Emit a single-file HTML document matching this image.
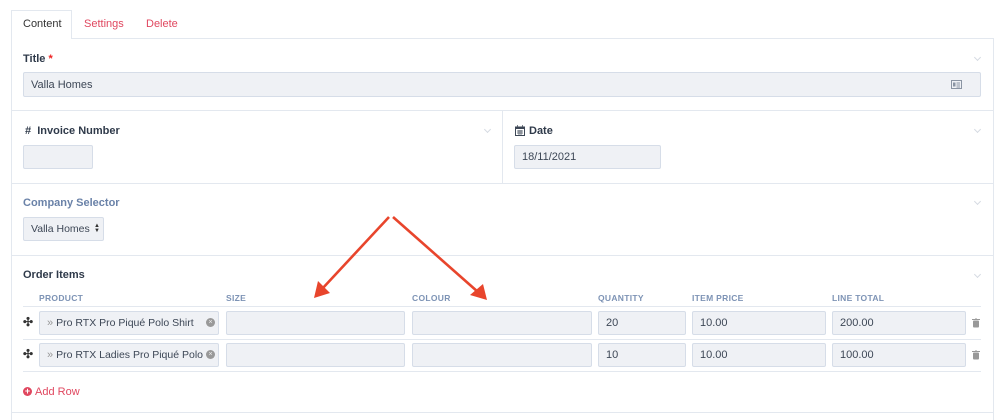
<!DOCTYPE html>
<html><head><meta charset="utf-8"><style>
*{box-sizing:border-box;margin:0;padding:0}
body{width:1000px;height:420px;background:#fff;font-family:"Liberation Sans",sans-serif;position:relative;overflow:hidden;color:#3d4756}
.a{position:absolute}
.hl{position:absolute;height:1px;background:#e3e8ef}
.vl{position:absolute;width:1px;background:#e3e8ef}
.in{position:absolute;background:#eff1f5;border:1px solid #d6dde8;border-radius:2px;font-size:11px;color:#3d4756;padding-left:7px;display:flex;align-items:center;white-space:nowrap;overflow:hidden}
.lb{position:absolute;font-size:11px;font-weight:bold;color:#2f3a4a}
.th{position:absolute;font-size:8.5px;font-weight:bold;color:#7d93b5;letter-spacing:.3px}
.chev{position:absolute;width:5px;height:5px;border-right:1px solid #d5dae2;border-bottom:1px solid #d5dae2;transform:rotate(45deg)}
.pt{display:inline-block;width:150px;overflow:hidden;font-size:10.5px}
</style></head><body>
<div class="a" style="left:11px;top:10px;width:61px;height:29px;border:1px solid #e3e8ef;border-bottom:none;background:#fff;z-index:2"></div>
<div class="a" style="left:23px;top:18px;font-size:11px;color:#333;z-index:3">Content</div>
<div class="a" style="left:84px;top:18px;font-size:11px;color:#e0475f">Settings</div>
<div class="a" style="left:146px;top:18px;font-size:11px;color:#e0475f">Delete</div>
<div class="hl" style="left:11px;top:38px;width:982px"></div>
<div class="vl" style="left:11px;top:38px;height:382px"></div>
<div class="vl" style="left:993px;top:38px;height:382px"></div>
<div class="lb" style="left:23px;top:53px">Title <span style="color:#e22">*</span></div>
<div class="chev" style="left:975px;top:55px"></div>
<div class="in" style="left:23px;top:72px;width:958px;height:25px">Valla Homes</div>
<svg class="a" style="left:951px;top:80px" width="11" height="9"><rect x=".5" y=".5" width="10" height="8" fill="none" stroke="#8a94a3"/><rect x="2" y="2.5" width="2.5" height="4" fill="#8a94a3"/><path d="M5.5 3h3.5M5.5 5h3.5M5.5 7h3.5" stroke="#8a94a3"/></svg>
<div class="hl" style="left:11px;top:110px;width:982px"></div>
<div class="lb" style="left:25px;top:125px">#&nbsp; Invoice Number</div>
<div class="chev" style="left:485px;top:127px"></div>
<div class="in" style="left:23px;top:145px;width:70px;height:24px"></div>
<div class="vl" style="left:502px;top:110px;height:73px"></div>
<svg class="a" style="left:515px;top:125px" width="10" height="11"><rect x=".5" y="2" width="9" height="8.5" fill="none" stroke="#3d4756"/><rect x=".5" y="2" width="9" height="2" fill="#3d4756"/><path d="M2.5 0v3M7.5 0v3M2 6h6M2 8h6M4 5v5M6 5v5" stroke="#3d4756" stroke-width=".7"/></svg>
<div class="lb" style="left:529px;top:125px">Date</div>
<div class="chev" style="left:975px;top:127px"></div>
<div class="in" style="left:514px;top:145px;width:147px;height:24px">18/11/2021</div>
<div class="hl" style="left:11px;top:183px;width:982px"></div>
<div class="lb" style="left:23px;top:197px;color:#6a82a8">Company Selector</div>
<div class="chev" style="left:975px;top:199px"></div>
<div class="in" style="left:23px;top:217px;width:81px;height:24px;padding-left:7px;font-size:10.5px">Valla Homes<span style="position:absolute;left:70px;top:6px;font-size:6px;line-height:5px;color:#333">▲<br>▼</span></div>
<div class="hl" style="left:11px;top:255px;width:982px"></div>
<div class="lb" style="left:23px;top:269px">Order Items</div>
<div class="chev" style="left:975px;top:272px"></div>
<div class="th" style="left:39px;top:293px">PRODUCT</div>
<div class="th" style="left:226px;top:293px">SIZE</div>
<div class="th" style="left:412px;top:293px">COLOUR</div>
<div class="th" style="left:598px;top:293px">QUANTITY</div>
<div class="th" style="left:692px;top:293px">ITEM PRICE</div>
<div class="th" style="left:832px;top:293px">LINE TOTAL</div>
<div class="hl" style="left:23px;top:306px;width:958px"></div>
<div class="hl" style="left:23px;top:339px;width:958px"></div>
<div class="hl" style="left:23px;top:371px;width:958px"></div>

<div class="a" style="left:23px;top:315px;font-size:12px;color:#333;font-weight:bold">✣</div>
<div class="in" style="left:39px;top:311px;width:180px;height:24px"><span style="color:#999;margin-right:3px">»</span><span class="pt">Pro RTX Pro Piqué Polo Shirt</span></div>
<div class="a" style="left:206px;top:318px;width:9px;height:9px;border-radius:50%;background:#999;color:#eee;font-size:7px;line-height:9px;text-align:center">×</div>
<div class="in" style="left:226px;top:311px;width:179px;height:24px"></div>
<div class="in" style="left:412px;top:311px;width:180px;height:24px"></div>
<div class="in" style="left:598px;top:311px;width:88px;height:24px">20</div>
<div class="in" style="left:692px;top:311px;width:134px;height:24px">10.00</div>
<div class="in" style="left:832px;top:311px;width:134px;height:24px">200.00</div>
<svg class="a" style="left:972px;top:318px" width="8" height="10"><path d="M0 1.5h8M3 0h2" stroke="#999"/><rect x="1" y="2.5" width="6" height="7" rx="1" fill="#999"/></svg>
<div class="a" style="left:23px;top:347px;font-size:12px;color:#333;font-weight:bold">✣</div>
<div class="in" style="left:39px;top:343px;width:180px;height:24px"><span style="color:#999;margin-right:3px">»</span><span class="pt">Pro RTX Ladies Pro Piqué Polo Shirt</span></div>
<div class="a" style="left:206px;top:350px;width:9px;height:9px;border-radius:50%;background:#999;color:#eee;font-size:7px;line-height:9px;text-align:center">×</div>
<div class="in" style="left:226px;top:343px;width:179px;height:24px"></div>
<div class="in" style="left:412px;top:343px;width:180px;height:24px"></div>
<div class="in" style="left:598px;top:343px;width:88px;height:24px">10</div>
<div class="in" style="left:692px;top:343px;width:134px;height:24px">10.00</div>
<div class="in" style="left:832px;top:343px;width:134px;height:24px">100.00</div>
<svg class="a" style="left:972px;top:350px" width="8" height="10"><path d="M0 1.5h8M3 0h2" stroke="#999"/><rect x="1" y="2.5" width="6" height="7" rx="1" fill="#999"/></svg>
<div class="a" style="left:23px;top:387px;width:9px;height:9px;border-radius:50%;background:#e0475f;color:#fff;font-size:9px;line-height:9px;text-align:center;font-weight:bold">+</div>
<div class="a" style="left:35px;top:386px;font-size:11px;color:#e0475f">Add Row</div>
<div class="hl" style="left:11px;top:412px;width:982px"></div>
<svg class="a" style="left:0;top:0" width="1000" height="420">
<g stroke="#e8452c" stroke-width="2.6" fill="#e8452c">
<line x1="389" y1="217" x2="322" y2="289"/>
<line x1="393" y1="217" x2="478" y2="292"/>
</g>
<polygon points="314,298 318,281 330,293" fill="#e8452c"/>
<polygon points="487,300 470,295 483,284" fill="#e8452c"/>
</svg>
</body></html>
